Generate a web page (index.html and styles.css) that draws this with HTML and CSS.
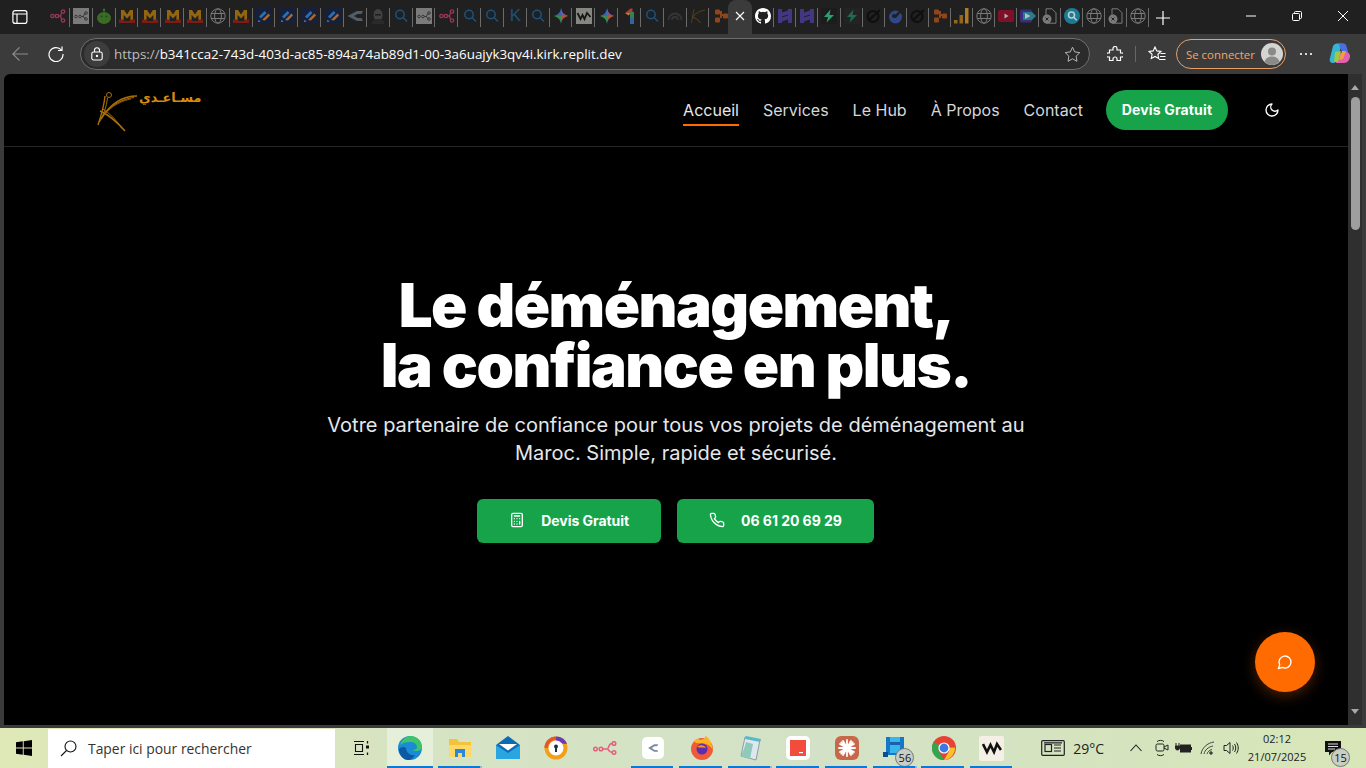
FILE: index.html
```html
<!DOCTYPE html>
<html lang="fr">
<head>
  <meta charset="UTF-8">
  <meta name="viewport" content="width=device-width, initial-scale=1.0">
  <title>Déménagement - Le Hub</title>
  <link rel="stylesheet" href="styles.css">
</head>
<body>
  <svg class="defs" width="0" height="0">
    <symbol id="f-share" viewBox="0 0 16 16"><g fill="none" stroke="#b03a60" stroke-width="1.3"><circle cx="2.5" cy="8" r="1.7"/><circle cx="7" cy="8" r="1.7"/><circle cx="13" cy="3.5" r="1.7"/><circle cx="13" cy="12.5" r="1.7"/><path d="M9 8h1.5l1-3M10.5 8l1 3"/></g></symbol>
    <symbol id="f-sharegrey" viewBox="0 0 16 16"><rect width="16" height="16" fill="#8b8b8b"/><g fill="none" stroke="#3c3c3c" stroke-width="1"><circle cx="3" cy="8.5" r="1.3"/><circle cx="7" cy="8.5" r="1.3"/><circle cx="13" cy="5" r="1.3"/><circle cx="13" cy="11" r="1.3"/><path d="M8.4 8.5h2l1.4-3M10.4 8.5l1.4 2.4"/></g></symbol>
    <symbol id="f-bot" viewBox="0 0 16 16"><circle cx="8" cy="1.8" r="1.3" fill="#3f7a28"/><path d="M7.5 2h1v3h-1z" fill="#3f7a28"/><ellipse cx="8" cy="10" rx="7" ry="6" fill="#3f7a28"/><circle cx="5.5" cy="8.5" r="1" fill="#254b18"/><circle cx="10.5" cy="8.5" r="1" fill="#254b18"/></symbol>
    <symbol id="f-m" viewBox="0 0 16 16"><path d="M2 12V2h3l3 4.500L11 2h3v10h-2.600V7L8 10.500 4.600 7v5z" fill="#a8720f"/><path d="M0 11.500h5V15H0zM11 11.500h5V15h-5zM5 13h6v2H5z" fill="#8c1d14"/></symbol>
    <symbol id="f-globe" viewBox="0 0 16 16"><g fill="none" stroke="#8a8a8a" stroke-width="1"><circle cx="8" cy="8" r="7.2"/><ellipse cx="8" cy="8" rx="3.4" ry="7.2"/><path d="M1.3 5.5h13.4M1.3 10.5h13.4"/></g></symbol>
    <symbol id="f-pen" viewBox="0 0 16 16"><rect width="16" height="16" fill="#16213f"/><path d="M3 8.500l5.500-5.500 2 2-5.500 5.500z" fill="#2b7dcf"/><path d="M6 12l6.500-6.500 1.500 2-5 5z" fill="#c9752b"/><path d="M2.500 12l2 1.200-2.300.8z" fill="#9aa6bb"/></symbol>
    <symbol id="f-chev" viewBox="0 0 16 16"><path d="M16 3H10L.5 8 10 13h6l-1.500-3H10.500L7 8l3.500-2H14.500z" fill="#5c6874"/></symbol>
    <symbol id="f-face" viewBox="0 0 16 16"><ellipse cx="8" cy="7" rx="4.500" ry="6" fill="#4b4846"/><path d="M5 6h6v1.500H5z" fill="#1d1d1d"/><path d="M1.500 16c.5-4 3-5 6.500-5s6 1 6.500 5z" fill="#2c2c2c"/></symbol>
    <symbol id="f-search" viewBox="0 0 16 16"><g fill="none" stroke="#1d5b8e" stroke-width="1.500"><circle cx="7" cy="6.500" r="4.200"/><path d="M10 9.500l4 4"/></g></symbol>
    <symbol id="f-gem" viewBox="0 0 16 16"><path d="M8 0c.6 4.500 3 7.300 8 8-5 .7-7.400 3.500-8 8V8z" fill="#c9603d"/><path d="M8 0C7.400 4.500 5 7.300 0 8h8z" fill="#3b73c4"/><path d="M0 8c5 .7 7.400 3.500 8 8V8z" fill="#3d9c61"/><path d="M8 0c.6 4.500 3 7.300 8 8H8z" fill="#8a5fb5"/></symbol>
    <symbol id="f-w" viewBox="0 0 16 16"><rect width="16" height="16" fill="#9a9a92"/><path d="M1.500 5l3 6 2-4 2 4 2.500-6 3.500 4" fill="none" stroke="#161616" stroke-width="1.800"/></symbol>
    <symbol id="f-one" viewBox="0 0 16 16"><path d="M3 5l5.500-4.500H10.500V5z" fill="#c4453b"/><path d="M3 5l3.500 2.500L8.500 5.500V5z" fill="#c79a22"/><path d="M8 4h4v6H8z" fill="#3f8f5a"/><path d="M8 10h4v6H8z" fill="#3a6fb5"/></symbol>
    <symbol id="f-dark" viewBox="0 0 16 16"><g fill="none" stroke="#3a3a3a" stroke-width="1.800"><path d="M1.500 12a6.500 6.500 0 1 1 13 0"/><path d="M5 12a3 3 0 0 1 6 0"/></g></symbol>
    <symbol id="f-kgold" viewBox="0 0 16 16"><g fill="none" stroke="#59431a" stroke-width="1.100"><path d="M4 1L1.500 15"/><path d="M15 2C9 3 5 6 2.500 9c3 1 6 3 8 6"/></g></symbol>
    <symbol id="f-nodes" viewBox="0 0 16 16"><g fill="#a84c1a"><rect x="2" y="1.500" width="5" height="5" rx="1"/><rect x="2" y="9.500" width="5" height="5" rx="1"/><rect x="10" y="5.500" width="5" height="5" rx="1"/><path d="M7 3h2v3h1v2H7zM7 10h2V8H7z"/></g></symbol>
    <symbol id="f-gh" viewBox="0 0 16 16"><path fill="#fff" d="M8 0C3.580 0 0 3.580 0 8c0 3.540 2.290 6.530 5.470 7.590.4.070.55-.17.55-.38 0-.19-.010-.82-.010-1.490-2.010.370-2.530-.490-2.690-.940-.090-.230-.480-.940-.820-1.130-.280-.150-.680-.520-.010-.530.630-.010 1.080.580 1.230.820.720 1.210 1.870.870 2.330.660.070-.520.280-.870.510-1.070-1.780-.200-3.640-.890-3.640-3.950 0-.870.310-1.590.820-2.150-.080-.200-.360-1.020.080-2.120 0 0 .670-.210 2.200.820a7.420 7.420 0 0 1 4 0c1.530-1.040 2.200-.820 2.200-.820.440 1.100.160 1.920.080 2.120.510.560.820 1.270.820 2.150 0 3.070-1.870 3.750-3.650 3.950.290.250.540.730.540 1.480 0 1.070-.010 1.930-.010 2.200 0 .210.150.460.550.380A8.010 8.010 0 0 0 16 8c0-4.420-3.580-8-8-8z"/></symbol>
    <symbol id="f-h" viewBox="0 0 16 16"><g fill="#4b3a94"><path d="M1 1h4v14H1zM11 1h4v14h-4z"/><path d="M5 4.500l6-2v4l-6 2zM5 9.500l6-2v4l-6 2z"/></g></symbol>
    <symbol id="f-bolt" viewBox="0 0 16 16"><rect width="16" height="16" fill="#1c1c1c"/><path d="M9.500 1.500L3 9h4l-1.500 5.500L13 7H8.500z" fill="#2fb57f"/></symbol>
    <symbol id="f-boltdim" viewBox="0 0 16 16"><rect width="16" height="16" fill="#242424"/><path d="M9.500 1.500L3 9h4l-1.500 5.500L13 7H8.500z" fill="#1f7a57"/></symbol>
    <symbol id="f-swirl" viewBox="0 0 16 16"><g fill="none" stroke="#0c0c0c" stroke-width="2"><circle cx="7" cy="8.500" r="5.500"/><path d="M3 12L14 2"/></g></symbol>
    <symbol id="f-blue" viewBox="0 0 16 16"><circle cx="7.500" cy="9" r="6.500" fill="#33509c"/><path d="M5 9l7-7 2 1-6 7z" fill="#202020"/><circle cx="6" cy="8" r="2" fill="#202020"/></symbol>
    <symbol id="f-bars" viewBox="0 0 16 16"><g fill="#a8741f"><rect x="0" y="12" width="3.500" height="3.500"/><rect x="5.500" y="7" width="3.500" height="8.500"/></g><rect x="11" y="0" width="3.500" height="15.500" fill="#c48d26"/></symbol>
    <symbol id="f-yt" viewBox="0 0 16 16"><rect y="2" width="16" height="12" rx="2" fill="#8f0f2a"/><path d="M6.500 5.500l4 2.500-4 2.500z" fill="#c9c9c9"/></symbol>
    <symbol id="f-video" viewBox="0 0 16 16"><rect y="1.500" width="12" height="13" rx="2" fill="#3d318e"/><path d="M12 4l4 4-4 4H3V4z" fill="#2b8aa0"/><path d="M5 5l5.500 3L5 11z" fill="#cfd8dc"/></symbol>
    <symbol id="f-doc" viewBox="0 0 16 16"><path d="M4 .8h6l4 4v10.400H4z" fill="none" stroke="#8c8c8c" stroke-width="1"/><circle cx="5" cy="11" r="4.500" fill="#8c8c8c"/><path d="M3.500 9.500l3 3m0-3l-3 3" stroke="#222" stroke-width="1"/></symbol>
    <symbol id="f-teal" viewBox="0 0 16 16"><circle cx="8" cy="8" r="8" fill="#1d8aa8"/><g fill="none" stroke="#d8eef3" stroke-width="1.600"><circle cx="7.500" cy="7" r="3"/><path d="M9.700 9.300l3 3"/></g></symbol>
  </svg>

  <div class="tabbar">
    <div class="sidebar-btn">
      <svg width="16" height="16" viewBox="0 0 16 16" fill="none" stroke="#fff" stroke-width="1.200"><rect x=".9" y="1.600" width="14" height="12.800" rx="2.200"/><path d="M.9 5h14M5 5v9"/></svg>
    </div>
    <div class="tabs">
      <span class="tab"><svg class="fav"><use href="#f-share"/></svg></span>
      <span class="tab"><svg class="fav"><use href="#f-sharegrey"/></svg></span>
      <span class="tab"><svg class="fav"><use href="#f-bot"/></svg></span>
      <span class="tab"><svg class="fav"><use href="#f-m"/></svg></span>
      <span class="tab"><svg class="fav"><use href="#f-m"/></svg></span>
      <span class="tab"><svg class="fav"><use href="#f-m"/></svg></span>
      <span class="tab"><svg class="fav"><use href="#f-m"/></svg></span>
      <span class="tab"><svg class="fav"><use href="#f-globe"/></svg></span>
      <span class="tab"><svg class="fav"><use href="#f-m"/></svg></span>
      <span class="tab"><svg class="fav"><use href="#f-pen"/></svg></span>
      <span class="tab"><svg class="fav"><use href="#f-pen"/></svg></span>
      <span class="tab"><svg class="fav"><use href="#f-pen"/></svg></span>
      <span class="tab"><svg class="fav"><use href="#f-pen"/></svg></span>
      <span class="tab"><svg class="fav"><use href="#f-chev"/></svg></span>
      <span class="tab"><svg class="fav"><use href="#f-face"/></svg></span>
      <span class="tab"><svg class="fav"><use href="#f-search"/></svg></span>
      <span class="tab"><svg class="fav"><use href="#f-sharegrey"/></svg></span>
      <span class="tab"><svg class="fav"><use href="#f-share"/></svg></span>
      <span class="tab"><svg class="fav"><use href="#f-search"/></svg></span>
      <span class="tab"><svg class="fav"><use href="#f-search"/></svg></span>
      <span class="tab"><span class="fav-letter">K</span></span>
      <span class="tab"><svg class="fav"><use href="#f-search"/></svg></span>
      <span class="tab"><svg class="fav"><use href="#f-gem"/></svg></span>
      <span class="tab"><svg class="fav"><use href="#f-w"/></svg></span>
      <span class="tab"><svg class="fav"><use href="#f-gem"/></svg></span>
      <span class="tab"><svg class="fav"><use href="#f-one"/></svg></span>
      <span class="tab"><svg class="fav"><use href="#f-search"/></svg></span>
      <span class="tab"><svg class="fav"><use href="#f-dark"/></svg></span>
      <span class="tab"><svg class="fav"><use href="#f-kgold"/></svg></span>
      <span class="tab no-sep"><svg class="fav"><use href="#f-nodes"/></svg></span>
      <span class="tab active">
        <svg width="10" height="10" viewBox="0 0 10 10" stroke="#fff" stroke-width="1.100"><path d="M1 1l8 8M9 1L1 9"/></svg>
      </span>
      <span class="tab"><svg class="fav fav-bright"><use href="#f-gh"/></svg></span>
      <span class="tab"><svg class="fav"><use href="#f-h"/></svg></span>
      <span class="tab"><svg class="fav"><use href="#f-h"/></svg></span>
      <span class="tab"><svg class="fav"><use href="#f-bolt"/></svg></span>
      <span class="tab"><svg class="fav"><use href="#f-boltdim"/></svg></span>
      <span class="tab"><svg class="fav"><use href="#f-swirl"/></svg></span>
      <span class="tab"><svg class="fav"><use href="#f-blue"/></svg></span>
      <span class="tab"><svg class="fav"><use href="#f-swirl"/></svg></span>
      <span class="tab"><svg class="fav"><use href="#f-nodes"/></svg></span>
      <span class="tab"><svg class="fav"><use href="#f-bars"/></svg></span>
      <span class="tab"><svg class="fav"><use href="#f-globe"/></svg></span>
      <span class="tab"><svg class="fav"><use href="#f-yt"/></svg></span>
      <span class="tab"><svg class="fav"><use href="#f-video"/></svg></span>
      <span class="tab"><svg class="fav"><use href="#f-doc"/></svg></span>
      <span class="tab"><svg class="fav"><use href="#f-teal"/></svg></span>
      <span class="tab"><svg class="fav"><use href="#f-globe"/></svg></span>
      <span class="tab"><svg class="fav"><use href="#f-doc"/></svg></span>
      <span class="tab"><svg class="fav"><use href="#f-globe"/></svg></span>
    </div>
    <div class="new-tab">
      <svg width="14" height="14" viewBox="0 0 14 14" stroke="#fff" stroke-width="1.200"><path d="M7 0v14M0 7h14"/></svg>
    </div>
    <div class="win-controls">
      <span class="win-btn"><svg width="10" height="10" viewBox="0 0 10 10" stroke="#fff"><path d="M0 5h10"/></svg></span>
      <span class="win-btn"><svg width="10" height="10" viewBox="0 0 10 10" fill="none" stroke="#fff"><rect x=".5" y="2.500" width="7" height="7" rx="1"/><path d="M2.500 2.500v-1a1 1 0 0 1 1-1h5a1 1 0 0 1 1 1v5a1 1 0 0 1-1 1h-1"/></svg></span>
      <span class="win-btn"><svg width="10" height="10" viewBox="0 0 10 10" stroke="#fff"><path d="M0 0l10 10M10 0L0 10"/></svg></span>
    </div>
  </div>

  <div class="toolbar">
    <span class="tool-btn back">
      <svg width="16" height="16" viewBox="0 0 16 16" fill="none" stroke="#8d8d8d" stroke-width="1.200"><path d="M16 8H.8M7.500 1.300L.8 8l6.700 6.700"/></svg>
    </span>
    <span class="tool-btn">
      <svg width="16" height="16" viewBox="0 0 16 16" fill="none" stroke="#fff" stroke-width="1.200"><path d="M13.500 4.200A7 7 0 1 0 15 8"/><path d="M14 .5v4h-4"/></svg>
    </span>
    <div class="address">
      <span class="lock">
        <svg width="12" height="14" viewBox="0 0 12 14" fill="none" stroke="#fff" stroke-width="1.100"><rect x=".8" y="5" width="10.400" height="8" rx="1.800"/><path d="M3.500 5V3.200a2.500 2.500 0 0 1 5 0V5"/><circle cx="6" cy="9" r=".6" fill="#fff"/></svg>
      </span>
      <span class="url"><span class="url-scheme">https://</span>b341cca2-743d-403d-ac85-894a74ab89d1-00-3a6uajyk3qv4i.kirk.replit.dev</span>
      <svg class="star" width="17" height="17" viewBox="0 0 17 17" fill="none" stroke="#b5b5b5" stroke-width="1"><path d="M8.500 1.200l2.200 4.700 5.100.7-3.700 3.600.9 5.100-4.500-2.500L4 15.300l.9-5.100L1.200 6.600l5.100-.7z"/></svg>
    </div>
    <span class="tool-icon ext">
      <svg width="16" height="16" viewBox="0 0 16 16" fill="none" stroke="#fff" stroke-width="1.200"><path d="M6 2.500a2 2 0 0 1 4 0V4h3.500v3H15a2 2 0 0 1 0 4h-1.500v3.500H10V13a2 2 0 0 0-4 0v1.500H2.500V11H1a2 2 0 0 1 0-4h1.500V4H6z"/></svg>
    </span>
    <span class="tool-sep"></span>
    <span class="tool-icon fave">
      <svg width="18" height="16" viewBox="0 0 18 16" fill="none" stroke="#fff" stroke-width="1.100"><path d="M7 1l1.800 3.900 4.200.5-3.100 2.900.8 4.200L7 10.400 3.300 12.500l.8-4.200L1 5.400l4.200-.5zM12.500 7.500H17.500M12 10.500h5.500M11 13.500h6.500"/></svg>
    </span>
    <div class="signin">
      <span>Se connecter</span>
      <span class="signin-avatar">
        <svg width="22" height="22" viewBox="0 0 22 22"><circle cx="11" cy="11" r="11" fill="#d4d4d0"/><circle cx="11" cy="8.500" r="4" fill="#8a8a88"/><path d="M3.500 19c1-4 4-5.500 7.500-5.500s6.500 1.500 7.500 5.500A11 11 0 0 1 3.500 19z" fill="#8a8a88"/></svg>
      </span>
    </div>
    <span class="tool-icon dots">
      <svg width="14" height="4" viewBox="0 0 14 4" fill="#fff"><circle cx="2" cy="2" r="1.100"/><circle cx="7" cy="2" r="1.100"/><circle cx="12" cy="2" r="1.100"/></svg>
    </span>
    <span class="tool-icon copilot">
      <svg width="22" height="22" viewBox="0 0 22 22"><path d="M4 3c1-2 3-2.500 5-2.500h4L8 17c-.5 2-2 3-4 3-2.500 0-4-2-3-5z" fill="#35b4d4"/><path d="M10 2c.5-1.200 2-1.800 4-1.800 1.500 0 3 1 3.500 3L20 12l-7-3z" fill="#4a6fe0"/><path d="M8 11l8-2c3 0 5.500 2 5 5-.5 3-3 6-6 6H7z" fill="#e45fb0"/><path d="M6 9l6-1-3 11H5z" fill="#9ccc3c"/><path d="M13 8l4 0-3 8-4 1z" fill="#f0a040"/></svg>
    </span>
  </div>

  <div class="viewport">
    <div class="page">
      <header class="site-header">
        <a class="logo" href="#">
          <svg class="logo-mark" width="44" height="46" viewBox="0 0 44 46" fill="none" stroke="#a86f0c">
            <circle cx="13" cy="6" r="2.500" stroke-width="1"/>
            <path d="M9 7C8 18 5 27 2 36" stroke-width="1.400"/>
            <path d="M11.500 9C10.500 18 7.500 26 3.500 33" stroke-width="1"/>
            <path d="M41 7C27 7 14 15 5 30" stroke-width="1.600"/>
            <path d="M38 8.500C26 10 15 16 7 27" stroke-width="1"/>
            <path d="M35 10C25 12 16 17 9 24.500" stroke-width=".8"/>
            <path d="M4 22c9 4 18 12 25 20" stroke-width="1.600"/>
            <path d="M6 19.500c8 5 15 12 20 20" stroke-width="1"/>
          </svg>
          <span class="logo-text">مسـاعـدي</span>
        </a>
        <nav class="site-nav">
          <a class="nav-link current" href="#">Accueil</a>
          <a class="nav-link" href="#">Services</a>
          <a class="nav-link" href="#">Le Hub</a>
          <a class="nav-link" href="#">À Propos</a>
          <a class="nav-link" href="#">Contact</a>
          <a class="nav-cta" href="#">Devis Gratuit</a>
          <button class="theme-toggle" type="button">
            <svg width="16" height="16" viewBox="0 0 24 24" fill="none" stroke="#fff" stroke-width="2" stroke-linecap="round" stroke-linejoin="round"><path d="M12 3a6 6 0 0 0 9 9 9 9 0 1 1-9-9Z"/></svg>
          </button>
        </nav>
      </header>

      <section class="hero">
        <h1>Le déménagement,<br>la confiance en plus.</h1>
        <p>Votre partenaire de confiance pour tous vos projets de déménagement au Maroc. Simple, rapide et sécurisé.</p>
        <div class="hero-actions">
          <a class="btn btn-devis" href="#">
            <svg width="16" height="16" viewBox="0 0 24 24" fill="none" stroke="#fff" stroke-width="2" stroke-linecap="round" stroke-linejoin="round"><rect x="4" y="2" width="16" height="20" rx="2"/><path d="M8 6h8M16 14v4M16 10h.01M12 10h.01M8 10h.01M12 14h.01M8 14h.01M12 18h.01M8 18h.01"/></svg>
            Devis Gratuit
          </a>
          <a class="btn btn-phone" href="#">
            <svg width="16" height="16" viewBox="0 0 24 24" fill="none" stroke="#fff" stroke-width="2" stroke-linecap="round" stroke-linejoin="round"><path d="M22 16.920v3a2 2 0 0 1-2.180 2 19.790 19.790 0 0 1-8.630-3.070 19.500 19.500 0 0 1-6-6 19.790 19.790 0 0 1-3.070-8.670A2 2 0 0 1 4.110 2h3a2 2 0 0 1 2 1.720 12.840 12.840 0 0 0 .7 2.810 2 2 0 0 1-.45 2.110L8.090 9.910a16 16 0 0 0 6 6l1.270-1.270a2 2 0 0 1 2.110-.45 12.840 12.840 0 0 0 2.810.7A2 2 0 0 1 22 16.920z"/></svg>
            06 61 20 69 29
          </a>
        </div>
      </section>

      <button class="chat-fab" type="button">
        <svg width="16" height="16" viewBox="0 0 24 24" fill="none" stroke="#fff" stroke-width="2" stroke-linecap="round" stroke-linejoin="round"><path d="M7.900 20A9 9 0 1 0 4 16.100L2 22Z"/></svg>
      </button>
    </div>
    <div class="scrollbar">
      <span class="arrow-up"></span>
      <span class="thumb"></span>
      <span class="arrow-down"></span>
    </div>
  </div>

  <div class="taskbar">
    <span class="start">
      <svg width="16" height="16" viewBox="0 0 16 16" fill="#000"><path d="M0 2.300l6.800-1v6.300H0zM7.700 1.200L16 0v7.600H7.700zM0 8.400h6.800v6.300l-6.800-1zM7.700 8.400H16V16l-8.300-1.200z"/></svg>
    </span>
    <div class="search-box">
      <svg width="17" height="17" viewBox="0 0 17 17" fill="none" stroke="#111" stroke-width="1.100"><circle cx="10.500" cy="6.500" r="5.500"/><path d="M6.500 10.500L1 16"/></svg>
      <span>Taper ici pour rechercher</span>
    </div>
    <span class="task-view">
      <svg width="17" height="16" viewBox="0 0 17 16" fill="none" stroke="#111" stroke-width="1.100"><path d="M1 1.500h10M1 14.500h10M2.500 4.500h7v7h-7z"/><path d="M14.500 1v2.500M14.500 12.500V15" stroke-width="1.300"/><rect x="13" y="5.500" width="3" height="3" fill="#111" stroke="none"/></svg>
    </span>
    <div class="task-apps">
      <span class="app running current">
        <svg width="24" height="24" viewBox="0 0 24 24"><circle cx="12" cy="12" r="12" fill="#1b8bd6"/><path d="M2 9C4 3 9 0 13 0c6 0 11 5 11 11 0 3-3 4-6 4-2 0-3-.5-3-1 3 0 4-1.500 4-3 0-3-3-5-7-5-4 0-8 1-10 3z" fill="#3ec46d"/><path d="M8 12c0 5 5 8 9 7-2 3-4 5-7 5C5 24 1 19 1 13c2-2 5-3 7-1z" fill="#0c59a4"/></svg>
      </span>
      <span class="app running half">
        <svg width="24" height="22" viewBox="0 0 24 22"><path d="M1 2h8l2 3h12v15H1z" fill="#f5c33b"/><path d="M1 8h22v12H1z" fill="#ffd968"/><path d="M7 12h10v8h-3v-4h-4v4H7z" fill="#2b88d8"/></svg>
      </span>
      <span class="app">
        <svg width="24" height="24" viewBox="0 0 24 24"><path d="M0 9L12 0l12 9v14H0z" fill="#0a6cb5"/><path d="M0 9l12 8 12-8v14H0z" fill="#29a5e0"/><path d="M3 8h18l-9 6.500z" fill="#fff"/></svg>
      </span>
      <span class="app">
        <svg width="24" height="24" viewBox="0 0 24 24"><circle cx="12" cy="12" r="11.500" fill="#f2a019"/><path d="M12 .5A11.500 11.500 0 0 1 23 8L12 7z" fill="#6a3bb5"/><path d="M.5 12A11.500 11.500 0 0 1 12 .5V4a8 8 0 0 0-8 8z" fill="#e4582a"/><circle cx="12" cy="12" r="7.500" fill="#fff"/><circle cx="12" cy="10.500" r="2" fill="#233"/><path d="M11 11h2v5h-2z" fill="#233"/></svg>
      </span>
      <span class="app">
        <svg width="24" height="14" viewBox="0 0 24 14" fill="none" stroke="#e4607e" stroke-width="1.500"><circle cx="2.500" cy="8" r="1.800"/><circle cx="8" cy="8" r="1.800"/><circle cx="21" cy="2.500" r="1.800"/><circle cx="21" cy="11.500" r="1.800"/><path d="M10 8h4.500c1 0 1-5.500 4.500-5.500M14.500 8c1 0 1 3.500 4.500 3.500"/></svg>
      </span>
      <span class="app running">
        <span class="app-tile"><svg width="14" height="12" viewBox="0 0 16 16"><path d="M15 3H9.500L1.500 8l8 5H15l-1.500-2.500H10L6.500 8 10 5.500h3.500z" fill="#7d8ba1"/></svg></span>
      </span>
      <span class="app running">
        <svg width="24" height="24" viewBox="0 0 24 24"><circle cx="12" cy="13" r="11" fill="#ef5a3a"/><path d="M4 5c2 4 8 1 12 3 5 2 7 6 7 6-1-7-5-14-8-14 1 4-3 3-5 4-1-1-3-2-6 1z" fill="#ffb21e"/><circle cx="12" cy="13" r="5.500" fill="#5b2eb0"/><path d="M7 11c3-3 8-2 9 1-3-1-6 0-9-1z" fill="#ff9024"/></svg>
      </span>
      <span class="app running half">
        <svg width="24" height="26" viewBox="0 0 24 26"><path d="M7 2l15 3-4 20-15-4z" fill="#dfe7ee" stroke="#86a0a8"/><path d="M8 1l15 3-1 3-15-3z" fill="#58b8cc"/><path d="M3 21c3-6 4-10 5-14l7 2-3 15z" fill="#8fc9b9"/></svg>
      </span>
      <span class="app running">
        <span class="app-tile big"><svg width="16" height="16" viewBox="0 0 16 16"><rect width="16" height="16" fill="#f24c3d"/><path d="M9 12h4v1.200H9z" fill="#fff"/></svg></span>
      </span>
      <span class="app running">
        <svg width="24" height="24" viewBox="0 0 24 24"><rect width="24" height="24" rx="6" fill="#c8684a"/><g stroke="#fff" stroke-width="1.800" stroke-linecap="round"><path d="M12 4v16M4 12h16M6.300 6.300l11.400 11.400M17.700 6.300L6.300 17.700M8 5l8 14M16 5L8 19M5 8l14 8M19 8L5 16"/></g></svg>
      </span>
      <span class="app running half">
        <svg width="24" height="24" viewBox="0 0 24 24"><path d="M3 1h18v18H3z" fill="#1477c8"/><path d="M7 1h10v16H7z" fill="#35b7ee"/><path d="M7 6h10v3H7z" fill="#1a5fa8"/><path d="M0 16h5v5H0z" fill="#0a4f96"/></svg>
        <span class="badge app-badge">56</span>
      </span>
      <span class="app running">
        <svg width="24" height="24" viewBox="0 0 24 24"><circle cx="12" cy="12" r="12" fill="#e84235"/><path d="M12 24A12 12 0 0 1 1.600 6L7 15.500 12 24z" fill="#2fa84f"/><path d="M12 24l5.200-9-5.200-3 11-.5A12 12 0 0 1 12 24z" fill="#fbc02d"/><path d="M1.600 6L7 15l5-3z" fill="#2fa84f"/><circle cx="12" cy="12" r="5.600" fill="#fff"/><circle cx="12" cy="12" r="4.400" fill="#3b78e7"/></svg>
      </span>
      <span class="app running">
        <span class="app-tile w-tile"><svg width="20" height="14" viewBox="0 0 20 14" fill="none" stroke="#111" stroke-width="2.600"><path d="M1 3l4 8 3.500-7 3.500 7 3-8 4 6"/></svg></span>
      </span>
    </div>
    <div class="tray">
      <svg class="news" width="24" height="16" viewBox="0 0 24 16" fill="none" stroke="#222" stroke-width="1.200"><rect x=".7" y=".7" width="22.600" height="14.600" rx="1"/><rect x="4" y="4.500" width="6.500" height="7"/><path d="M13 5h7M13 8h7M13 11h7M3 2.800h18"/></svg>
      <span class="temp">29°C</span>
      <svg class="caret" width="12" height="8" viewBox="0 0 12 8" fill="none" stroke="#222" stroke-width="1.100"><path d="M.5 7L6 1l5.500 6"/></svg>
      <svg class="tray-meet" width="14" height="18" viewBox="0 0 14 18" fill="none" stroke="#222" stroke-width="1"><rect x="1" y="5" width="8" height="7" rx="1.500"/><path d="M9 8l4-2v5l-4-2M2 2.500c2-1.500 5-1.500 7 0M2 15.500c2 1.500 5 1.500 7 0"/></svg>
      <svg class="tray-plug" width="17" height="12" viewBox="0 0 17 12" fill="none" stroke="#222" stroke-width="1"><path d="M1 1v3M4 1v3M.5 4h4v2a2 2 0 0 1-4 0z" fill="#222"/><rect x="5.500" y="3" width="10" height="7" fill="#222"/><path d="M16.500 5v3"/></svg>
      <svg class="tray-wifi" width="16" height="14" viewBox="0 0 16 14" fill="none" stroke="#444" stroke-width="1"><path d="M1 13C2 7 7 2 14 1M4 13c1-4 4-7 9-8M7 13c.5-2 2.500-4 5-4.500"/><circle cx="11" cy="12" r="1.300" fill="#444"/></svg>
      <svg class="tray-sound" width="16" height="14" viewBox="0 0 16 14" fill="none" stroke="#222" stroke-width="1"><path d="M1 4.500h2.500L7 1.500v11l-3.500-3H1zM9.500 4.500c1 1.500 1 3.500 0 5M11.500 3c1.700 2.300 1.700 5.700 0 8M13.500 1.500c2.300 3.300 2.300 7.700 0 11"/></svg>
      <div class="clock"><span>02:12</span><span>21/07/2025</span></div>
      <span class="notif">
        <svg width="16" height="15" viewBox="0 0 16 15"><path d="M0 0h16v11H7l-3 3.500V11H0z" fill="#111"/><path d="M3 3h10M3 5.500h10M3 8h7" stroke="#ddd" stroke-width="1"/></svg>
        <span class="badge notif-badge">15</span>
      </span>
    </div>
  </div>
</body>
</html>
```

FILE: styles.css
```css
* {
  box-sizing: border-box;
}

html, body {
  margin: 0;
  height: 100%;
}

body {
  width: 1366px;
  height: 768px;
  overflow: hidden;
  display: flex;
  flex-direction: column;
  background: #3b3b3b;
  font-family: "Open Sans", "Noto Sans", sans-serif;
}

a {
  text-decoration: none;
}

.defs {
  display: block;
  height: 0;
}

/* browser tab strip */
.tabbar {
  height: 34px;
  flex: none;
  display: flex;
  align-items: stretch;
  background: #202020;
}

.sidebar-btn {
  width: 47px;
  flex: none;
  padding: 8px 0 0 12px;
}

.tabs {
  display: flex;
  width: 1104px;
  flex: none;
}

.tab {
  position: relative;
  width: 22.85px;
  display: flex;
  justify-content: center;
  padding-top: 8px;
  flex: none;
}

.tab::after {
  content: "";
  position: absolute;
  right: 0;
  top: 8px;
  height: 19px;
  width: 1px;
  background: #6b6b6b;
}

.tab.no-sep::after,
.tab.active::after {
  display: none;
}

.tab.active {
  width: 24px;
  background: #3b3b3b;
  border-radius: 8px 8px 0 0;
  padding-top: 11px;
  margin-left: -4px;
}

.tab.active ~ .tab {
  width: 22.06px;
}

.fav {
  width: 16px;
  height: 16px;
  opacity: 0.85;
}

.fav-bright {
  opacity: 1;
}

.fav-letter {
  font: 400 17px/16px "Liberation Sans", sans-serif;
  color: #1d4f80;
}

.new-tab {
  width: 24px;
  flex: none;
  padding: 8px 0 0 5px;
}

.win-controls {
  margin-left: auto;
  display: flex;
}

.win-btn {
  width: 46px;
  display: flex;
  justify-content: center;
  padding-top: 11px;
}

/* address bar row */
.toolbar {
  height: 40px;
  flex: none;
  display: flex;
  align-items: center;
  background: #3b3b3b;
  padding-left: 2px;
}

.tool-btn {
  width: 36px;
  display: flex;
  justify-content: center;
}

.address {
  width: 1010px;
  height: 32px;
  margin-left: 6px;
  display: flex;
  align-items: center;
  background: #2b2b2b;
  border: 1px solid #6e6e6e;
  border-radius: 16px;
  padding: 0 8px 0 3px;
}

.lock {
  width: 26px;
  height: 26px;
  border-radius: 50%;
  background: #3d3d3d;
  display: flex;
  align-items: center;
  justify-content: center;
  flex: none;
}

.url {
  margin-left: 4px;
  font-size: 13.4px;
  color: #fff;
  white-space: nowrap;
}

.url-scheme {
  color: #bdbdbd;
}

.star {
  margin-left: auto;
}

.tool-icon {
  display: flex;
  justify-content: center;
  align-items: center;
}

.ext {
  margin-left: 17px;
  width: 16px;
}

.tool-sep {
  width: 1px;
  height: 16px;
  background: #666;
  margin-left: 12px;
}

.fave {
  margin-left: 12px;
  width: 18px;
}

.signin {
  margin-left: 10px;
  width: 110px;
  height: 30px;
  border: 1px solid #e8a066;
  border-radius: 15px;
  display: flex;
  align-items: center;
  justify-content: space-between;
  padding: 0 2px 0 9px;
  font-size: 11.4px;
  color: #f2a76c;
}

.signin-avatar {
  display: flex;
}

.dots {
  margin-left: 13px;
  width: 14px;
}

.copilot {
  margin-left: 15px;
  width: 24px;
}

/* web page area */
.viewport {
  flex: 1;
  display: flex;
  padding: 0 4px 3px;
  min-height: 0;
}

.page {
  position: relative;
  flex: 1;
  background: #000;
  border-radius: 6px 0 0 0;
  font-family: Inter, sans-serif;
  overflow: hidden;
}

.site-header {
  height: 73px;
  display: flex;
  justify-content: space-between;
  align-items: center;
  border-bottom: 1px solid #262626;
  padding: 0 56px 0 92px;
}

.logo {
  display: flex;
  align-items: flex-start;
  height: 50px;
  margin-top: 5px;
}

.logo-mark {
  display: block;
  margin-top: 1px;
}

.logo-text {
  font: 700 12.8px/16px "DejaVu Sans", sans-serif;
  color: #d98c0a;
  margin: 2px 0 0 -1px;
}

.site-nav {
  display: flex;
  align-items: center;
  gap: 24px;
}

.nav-link {
  position: relative;
  font-size: 16px;
  font-weight: 400;
  line-height: 24px;
  color: #d4d7dc;
  padding: 4px 0;
}

.nav-link.current {
  color: #e5e7eb;
}

.nav-link.current::after {
  content: "";
  position: absolute;
  left: 0;
  right: 0;
  bottom: 0;
  height: 2px;
  background: #ff6b00;
}

.nav-cta {
  width: 122px;
  height: 40px;
  margin-left: -1px;
  border-radius: 20px;
  background: #16a34a;
  color: #fff;
  font-size: 14px;
  font-weight: 700;
  letter-spacing: 0.15px;
  display: flex;
  align-items: center;
  justify-content: center;
  padding-bottom: 1px;
}

.theme-toggle {
  width: 40px;
  height: 40px;
  border: 0;
  background: none;
  display: flex;
  align-items: center;
  justify-content: center;
  padding: 0;
}

.hero {
  padding-top: 128px;
  text-align: center;
}

.hero h1 {
  margin: 0;
  font-size: 60px;
  line-height: 60px;
  font-weight: 900;
  letter-spacing: -1.5px;
  color: #fff;
}

.hero p {
  width: 720px;
  margin: 16px auto 0;
  font-size: 20px;
  line-height: 28px;
  color: #e5e7eb;
}

.hero-actions {
  margin-top: 32px;
  display: flex;
  justify-content: center;
  gap: 16px;
  padding-right: 1px;
}

.btn {
  height: 44px;
  border-radius: 6px;
  display: flex;
  align-items: center;
  gap: 16px;
  padding: 0 32px 2px;
  background: #16a34a;
  color: #fff;
  font-size: 14px;
  font-weight: 700;
  letter-spacing: -0.04px;
}

.chat-fab {
  position: absolute;
  right: 33px;
  bottom: 33px;
  width: 60px;
  height: 60px;
  border: 0;
  border-radius: 50%;
  background: #ff6b00;
  box-shadow: 0 4px 14px rgba(255, 107, 0, 0.3);
  display: flex;
  align-items: center;
  justify-content: center;
  padding: 0;
}

.scrollbar {
  width: 14px;
  flex: none;
  background: #2f2f2f;
  display: flex;
  flex-direction: column;
  align-items: center;
  padding: 11px 0;
}

.thumb {
  width: 9px;
  height: 133px;
  margin-top: 7px;
  border-radius: 5px;
  background: #9e9e9e;
}

.arrow-up,
.arrow-down {
  width: 0;
  height: 0;
  border-left: 4.5px solid transparent;
  border-right: 4.5px solid transparent;
}

.arrow-up {
  border-bottom: 5px solid #a8a8a8;
}

.arrow-down {
  margin-top: auto;
  border-top: 5px solid #a8a8a8;
}

/* windows taskbar */
.taskbar {
  height: 40px;
  flex: none;
  display: flex;
  align-items: center;
  background: linear-gradient(90deg, #dfe8b6 0%, #d6e3c4 35%, #d3e2c6 60%, #d8e6b8 100%);
  color: #222;
}

.start {
  width: 48px;
  display: flex;
  justify-content: center;
}

.search-box {
  width: 287px;
  height: 39px;
  margin-top: 1px;
  display: flex;
  align-items: center;
  gap: 11px;
  padding-left: 12px;
  background: #fff;
  font-size: 13.9px;
  color: #333;
}

.task-view {
  width: 52px;
  display: flex;
  justify-content: center;
}

.task-apps {
  display: flex;
  height: 100%;
}

.app {
  position: relative;
  width: 48.4px;
  display: flex;
  align-items: center;
  justify-content: center;
}

.app.current {
  width: 46px;
  margin-right: 2.5px;
  background: #e6efd9;
}

.app.running::after {
  content: "";
  position: absolute;
  left: 2px;
  right: 4px;
  bottom: 0;
  height: 2px;
  background: #0f78d4;
}

.app.current::after {
  left: 0;
  right: 0;
}

.app.half::before {
  content: "";
  position: absolute;
  right: 2px;
  width: 8px;
  bottom: 0;
  height: 2px;
  background: #8fb8d8;
}

.app-tile {
  width: 22px;
  height: 22px;
  border-radius: 5px;
  background: #fff;
  display: flex;
  align-items: center;
  justify-content: center;
}

.app-tile.big {
  width: 24px;
  height: 24px;
}

.w-tile {
  width: 25px;
  height: 25px;
  background: #f5f0e6;
  border-radius: 2px;
}

.badge {
  position: absolute;
  border-radius: 50%;
  background: #c9cec5;
  border: 1px solid #777;
  color: #111;
  font-size: 11px;
  line-height: 17px;
  text-align: center;
  width: 19px;
  height: 19px;
}

.app-badge {
  right: 5px;
  bottom: 1px;
}

.tray {
  flex: 1;
  display: flex;
  align-items: center;
  font-size: 13px;
  color: #222;
  position: relative;
  padding-left: 25px;
}

.temp {
  margin-left: 8px;
  font-size: 14px;
}

.caret {
  margin-left: 26px;
}

.tray-meet {
  margin-left: 13px;
}

.tray-plug {
  margin-left: 6px;
}

.tray-wifi {
  margin-left: 8px;
}

.tray-sound {
  margin-left: 7px;
}

.clock {
  width: 60px;
  margin-left: 8px;
  display: flex;
  flex-direction: column;
  align-items: center;
  font-size: 11px;
  line-height: 18px;
}

.notif {
  position: relative;
  margin-left: 18px;
  display: flex;
}

.notif-badge {
  left: 6px;
  top: 7px;
  font-size: 11px;
}
```
